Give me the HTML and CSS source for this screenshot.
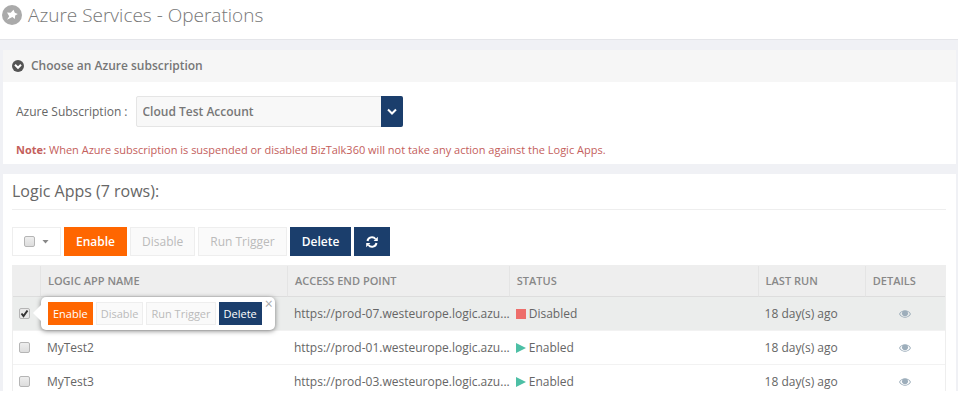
FILE: index.html
```html
<!DOCTYPE html>
<html lang="en">
<head>
<meta charset="utf-8">
<title>Azure Services - Operations</title>
<link rel="stylesheet" href="styles.css">
</head>
<body>
<svg class="sprite" aria-hidden="true">
  <symbol id="eye" viewBox="0 0 12 8">
    <path fill="currentColor" fill-rule="evenodd" d="M0 4C1.500 1.400 3.600.2 6 .2S10.500 1.400 12 4C10.500 6.600 8.400 7.800 6 7.800S1.500 6.600 0 4ZM1 4C2.200 6 4 7 6 7S9.800 6 11 4C10.300 2.800 9.500 2 8.500 1.500A3 3 0 1 1 3.500 1.500C2.500 2 1.700 2.800 1 4Z"/>
    <circle cx="6" cy="3.200" r="2.400" fill="currentColor"/>
  </symbol>
  <symbol id="play" viewBox="0 0 10 10"><path fill="currentColor" d="M0 0L10 5L0 10Z"/></symbol>
  <symbol id="stop" viewBox="0 0 10 10"><path fill="currentColor" d="M0 0H10V10H0Z"/></symbol>
</svg>
<div class="page">
  <header class="page-header">
    <svg class="page-icon" viewBox="0 0 20 20" aria-hidden="true">
      <circle cx="10" cy="10" r="10" fill="#aaa"/>
      <path fill="#fff" d="M11.500 4.800L12.800 7.800L15.800 9L13.200 10.600L12.800 14L10.400 12L5 14.800L7.200 11.200L5 7.600L8.700 7.800Z"/>
    </svg>
    <h1>Azure Services - Operations</h1>
  </header>
  <main class="content">
    <section class="panel">
      <h2 class="panel-heading">
        <svg class="toggle-icon" viewBox="0 0 12 12" aria-hidden="true">
          <circle cx="6" cy="6" r="6" fill="#555"/>
          <path d="M3 4.800L6 7.800L9 4.800" fill="none" stroke="#fff" stroke-width="2"/>
        </svg>
        Choose an Azure subscription
      </h2>
      <div class="panel-body">
        <div class="field">
          <label for="subscription">Azure Subscription :</label>
          <div class="select-box">
            <select id="subscription"><option>Cloud Test Account</option></select>
            <svg class="select-arrow" viewBox="0 0 22 30" aria-hidden="true"><path d="M7 13L11 17L15 13" fill="none" stroke="#fff" stroke-width="2"/></svg>
          </div>
        </div>
        <p class="note"><strong>Note:</strong> When Azure subscription is suspended or disabled BizTalk360 will not take any action against the Logic Apps.</p>
      </div>
    </section>
    <section class="panel apps">
      <h2 class="apps-title">Logic Apps (7 rows):</h2>
      <div class="toolbar">
        <div class="btn select-all">
          <input type="checkbox" aria-label="Select all">
          <button type="button" class="caret" aria-label="Selection options"></button>
        </div>
        <button type="button" class="btn primary">Enable</button>
        <button type="button" class="btn" disabled>Disable</button>
        <button type="button" class="btn" disabled>Run Trigger</button>
        <button type="button" class="btn navy">Delete</button>
        <button type="button" class="btn navy" aria-label="Refresh">
          <svg class="refresh-icon" viewBox="0 0 12 12" aria-hidden="true">
            <path d="M1.500 5A4.500 4.500 0 0 1 9.500 3M10.500 7A4.500 4.500 0 0 1 2.500 9" fill="none" stroke="#fff" stroke-width="2"/>
            <path d="M11.800.8V5H7.600ZM.2 11.200V7H4.400Z" fill="#fff"/>
          </svg>
        </button>
      </div>
      <table>
        <colgroup><col class="c-check"><col class="c-name"><col class="c-url"><col class="c-status"><col class="c-run"><col class="c-details"></colgroup>
        <thead>
          <tr><th></th><th>LOGIC APP NAME</th><th>ACCESS END POINT</th><th>STATUS</th><th>LAST RUN</th><th>DETAILS</th></tr>
        </thead>
        <tbody>
          <tr class="selected">
            <td class="check">
              <input type="checkbox" aria-label="Select row" checked>
              <div class="popover">
                <button type="button" class="btn small primary">Enable</button>
                <button type="button" class="btn small" disabled>Disable</button>
                <button type="button" class="btn small" disabled>Run Trigger</button>
                <button type="button" class="btn small navy">Delete</button>
                <button type="button" class="close" aria-label="Close">×</button>
              </div>
            </td>
            <td></td>
            <td>https://prod-07.westeurope.logic.azu...</td>
            <td><svg class="state off"><use href="#stop"/></svg>Disabled</td>
            <td>18 day(s) ago</td>
            <td class="details"><button type="button" aria-label="View details"><svg class="eye"><use href="#eye"/></svg></button></td>
          </tr>
          <tr>
            <td class="check"><input type="checkbox" aria-label="Select MyTest2"></td>
            <td>MyTest2</td>
            <td>https://prod-01.westeurope.logic.azu...</td>
            <td><svg class="state on"><use href="#play"/></svg>Enabled</td>
            <td>18 day(s) ago</td>
            <td class="details"><button type="button" aria-label="View details"><svg class="eye"><use href="#eye"/></svg></button></td>
          </tr>
          <tr>
            <td class="check"><input type="checkbox" aria-label="Select MyTest3"></td>
            <td>MyTest3</td>
            <td>https://prod-03.westeurope.logic.azu...</td>
            <td><svg class="state on"><use href="#play"/></svg>Enabled</td>
            <td>18 day(s) ago</td>
            <td class="details"><button type="button" aria-label="View details"><svg class="eye"><use href="#eye"/></svg></button></td>
          </tr>
        </tbody>
      </table>
    </section>
  </main>
</div>
</body>
</html>
```
FILE: styles.css
```css
* { box-sizing: border-box; }
body {
  margin: 0;
  background: #fff;
  color: #666;
  font: 12px/18px "Open Sans", "Liberation Sans", sans-serif;
}
button, select { font: inherit; }
h1, h2, p { margin: 0; }
.sprite { display: none; }
.page {
  display: flex;
  flex-direction: column;
  height: calc(100vh - 10px);
  margin-right: 19px;
  overflow: hidden;
}
.page-header {
  display: flex;
  align-items: center;
  gap: 6px;
  flex: none;
  height: 40px;
  padding: 0 2px 10px;
  border-bottom: 1px solid #e4e5e9;
}
.page-icon { width: 20px; height: 20px; }
h1 { font-size: 19px; line-height: 28px; font-weight: 300; color: #777; }
.content {
  display: flex;
  flex-direction: column;
  gap: 10px;
  flex: 1;
  min-height: 0;
  padding: 10px 2px 0 3px;
  background: #f0f1f5;
}
.panel { flex: none; background: #fff; }
.panel-heading {
  display: flex;
  align-items: center;
  gap: 7px;
  height: 32px;
  padding: 0 9px;
  background: #f6f6f6;
  font-size: 12px;
  font-weight: 600;
  color: #777;
}
.toggle-icon { width: 12px; height: 12px; }
.panel-body { padding: 14px 13px 0; }
.field { display: flex; align-items: center; gap: 8px; }
.select-box { position: relative; width: 267px; height: 31px; }
.select-box select {
  appearance: none;
  width: 100%;
  height: 100%;
  padding: 0 28px 0 6px;
  border: 1px solid #e5e5e5;
  border-radius: 2px;
  background: #f8f8f8;
  color: #777;
  font-weight: 600;
}
.select-arrow {
  position: absolute;
  top: 0;
  right: 0;
  width: 22px;
  height: 31px;
  border-radius: 0 2px 2px 0;
  background: #1b3e6c;
  pointer-events: none;
}
.note { padding: 14px 0 5px; font-size: 11px; color: #c4605c; }
.apps { min-height: 240px; padding: 0 10px 0 9px; }
.apps-title {
  height: 36px;
  margin-bottom: 17px;
  border-bottom: 1px solid #eee;
  font-size: 16px;
  line-height: 34px;
  font-weight: 400;
}
.toolbar { display: flex; gap: 3px; margin-bottom: 9px; }
.btn {
  height: 29px;
  padding: 0 11px;
  border: 1px solid #eee;
  background: #fafafa;
  color: #bbb;
  font-size: 12px;
  line-height: 18px;
}
.btn.primary { border-color: #f60; background: #f60; color: #fff; font-weight: 600; }
.btn.navy { border-color: #1b3e6c; background: #1b3e6c; color: #fff; font-weight: 600; }
.select-all { display: flex; align-items: center; gap: 7px; background: #fff; }
.caret {
  width: 7px;
  height: 4px;
  padding: 0;
  border: 0;
  background: #888;
  clip-path: polygon(0 0, 100% 0, 50% 100%);
}
.refresh-icon { display: block; width: 12px; height: 12px; }
input[type="checkbox"] {
  appearance: none;
  display: block;
  width: 11px;
  height: 11px;
  margin: 0;
  border: 1px solid #b5b5b5;
  border-radius: 2px;
  background: linear-gradient(#eee, #ddd);
}
input[type="checkbox"]:checked {
  background: url("data:image/svg+xml,%3Csvg xmlns='http://www.w3.org/2000/svg' viewBox='0 0 9 9'%3E%3Cpath d='M1.500 4.500L3.500 7L7.500 1.500' fill='none' stroke='%23333' stroke-width='2'/%3E%3C/svg%3E") #e8e8e8;
}
table {
  width: 100%;
  border-collapse: separate;
  border-spacing: 0;
  border: 1px solid #eee;
  table-layout: fixed;
}
.c-check { width: 3%; }
.c-name { width: 26.500%; }
.c-url { width: 23.800%; }
.c-status { width: 26.700%; }
.c-run { width: 11.500%; }
.c-details { width: 8.500%; }
th, td { padding: 0 6px; text-align: left; white-space: nowrap; }
th {
  height: 31px;
  padding: 0 7px;
  border-right: 1px solid #e4e4e4;
  border-bottom: 1px solid #ddd;
  background: #eee;
  color: #888;
  font-size: 11px;
  font-weight: 600;
}
th:last-child { border-right: 0; }
td { height: 34px; border-bottom: 1px solid #f2f2f2; }
.selected td { background: #ebedec; }
.check { position: relative; }
.state { width: 10px; height: 10px; margin-right: 3px; vertical-align: -1px; }
.on { color: #4dbfa5; }
.off { color: #ee6e6b; }
.details { text-align: center; }
.details button { padding: 0; border: 0; background: none; color: #9daebb; }
.eye { display: block; width: 12px; height: 8px; }
.popover {
  position: absolute;
  z-index: 1;
  top: 0;
  left: 28px;
  display: flex;
  align-items: center;
  gap: 3px;
  height: 33px;
  padding: 0 13px 0 7px;
  border-radius: 5px;
  background: #fff;
  box-shadow: 0 1px 5px rgba(0, 0, 0, .5);
}
.popover::before {
  content: "";
  position: absolute;
  top: 8px;
  left: -8px;
  width: 8px;
  height: 16px;
  background: #fff;
  clip-path: polygon(100% 0, 100% 100%, 0 50%);
}
.btn.small { height: 23px; padding: 0 4px; font-size: 11px; }
.btn.small.primary, .btn.small.navy { font-weight: 500; }
.close {
  position: absolute;
  top: 0;
  right: 2px;
  padding: 0;
  border: 0;
  background: none;
  color: #aaa;
  font-size: 14px;
  line-height: 14px;
}
```
